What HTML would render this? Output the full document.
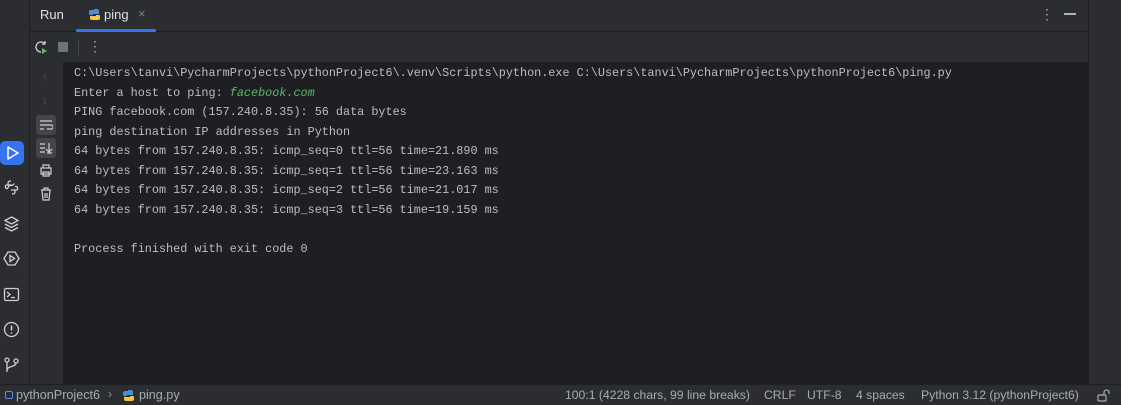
<!DOCTYPE html>
<html><head><style>
*{margin:0;padding:0;box-sizing:border-box}
body{width:1121px;height:405px;background:#2b2d30;position:relative;overflow:hidden;font-family:"Liberation Sans",sans-serif;color:#dfe1e5}
.abs{position:absolute}
.console{left:63px;top:62px;width:1026px;height:322px;background:#1e1f22}
.mono{font-family:"Liberation Mono",monospace;font-size:11.8px;color:#bcbec4;white-space:pre;position:absolute;left:74px}
.status{left:0;top:384px;width:1121px;height:21px;background:#2b2d30;border-top:1px solid #1e1f22;font-size:12.2px;color:#a8abb0}
.status .abs{white-space:pre}
svg{position:absolute}
</style></head><body>
<div class="abs" style="left:29px;top:0;width:1px;height:384px;background:#1e1f22"></div>
<div class="abs" style="left:1088px;top:0;width:1px;height:384px;background:#1e1f22"></div>
<div class="abs" style="left:30px;top:31px;width:1058px;height:1px;background:#1e1f22"></div>
<div class="abs" style="left:40px;top:7px;font-size:13px;color:#dfe1e5">Run</div>
<svg style="left:88px;top:8px" width="13" height="13" viewBox="0 0 13 13"><path d="M6 1h3a2 2 0 0 1 2 2v3H5v1H2a1.5 1.5 0 0 1-1-2V4a2 2 0 0 1 2-2h3z" fill="#4a8fd6"/><path d="M7 12H4a2 2 0 0 1-2-2V8h6V7h3a1.5 1.5 0 0 1 1 2v1a2 2 0 0 1-2 2z" fill="#f2c744"/></svg>
<div class="abs" style="left:104px;top:7px;font-size:13px;color:#dfe1e5">ping</div>
<div class="abs" style="left:138px;top:6px;font-size:13px;color:#7a7e85">×</div>
<div class="abs" style="left:76px;top:29px;width:80px;height:3px;background:#3574f0;border-radius:1px"></div>
<div class="abs" style="left:1040px;top:6px;font-size:14px;color:#a8abb0">⋮</div>
<div class="abs" style="left:1064px;top:13px;width:12px;height:1.5px;background:#b0b3b8"></div>
<svg style="left:34px;top:40px" width="14" height="14" viewBox="0 0 14 14"><path d="M11 4A5 5 0 1 0 7 12" stroke="#ced0d6" stroke-width="1.3" fill="none"/><path d="M11 1v3H8" stroke="#ced0d6" stroke-width="1.3" fill="none"/><path d="M8 8l5 3-5 3z" fill="#5fb865"/></svg>
<div class="abs" style="left:58px;top:42px;width:10px;height:10px;background:#6f737a;border-radius:1px"></div>
<div class="abs" style="left:78px;top:39px;width:1px;height:16px;background:#43454a"></div>
<div class="abs" style="left:88px;top:38px;font-size:14px;color:#a8abb0">⋮</div>
<div class="abs console"></div>
<div class="abs" style="left:42px;top:70px;color:#55585e;font-size:12px">↑</div>
<div class="abs" style="left:42px;top:93px;color:#55585e;font-size:12px">↓</div>
<div class="abs" style="left:36px;top:115px;width:20px;height:20px;background:#43454a;border-radius:3px"></div>
<svg style="left:39px;top:119px" width="14" height="12"><path d="M1 2h12M1 6h11a2 2 0 0 1 0 4H8M1 10h4" stroke="#ced0d6" stroke-width="1.2" fill="none"/></svg>
<div class="abs" style="left:36px;top:138px;width:20px;height:20px;background:#43454a;border-radius:3px"></div>
<svg style="left:39px;top:142px" width="14" height="12"><path d="M1 2h5M1 6h5M1 10h5M10 1v9M7 7l3 3 3-3M8 11h5" stroke="#ced0d6" stroke-width="1.2" fill="none"/></svg>
<svg style="left:39px;top:164px" width="14" height="13"><path d="M4 4V1h6v3M2 4h10v6H2zM4 8h6v4H4z" stroke="#ced0d6" stroke-width="1.2" fill="none"/></svg>
<svg style="left:40px;top:187px" width="12" height="14"><path d="M1 3h10M4 3V1h4v2M2 3l1 10h6l1-10M5 6v5M7 6v5" stroke="#ced0d6" stroke-width="1.2" fill="none"/></svg>
<div class="abs" style="left:0;top:141px;width:24px;height:24px;background:#3574f0;border-radius:5px"></div>
<svg style="left:4px;top:145px" width="16" height="16"><path d="M4 2l10 6-10 6z" stroke="#fff" stroke-width="1.5" fill="none" stroke-linejoin="round"/></svg>
<svg style="left:3px;top:179px" width="17" height="17"><path d="M8 2c-3 0-3 1-3 3v1h4M5 6H3.5C2 6 2 9 3.5 9.5H5M9 15c3 0 3-1 3-3v-1H8M12 11h1.5C15 11 15 8 13.5 7.5H12M5 9.5c0-2 1-3 3-3s3-1 3-2" stroke="#ced0d6" stroke-width="1.3" fill="none"/></svg>
<svg style="left:3px;top:215px" width="17" height="17"><path d="M8.5 2L15 5.5 8.5 9 2 5.5zM2 9l6.5 3.5L15 9M2 12.5L8.5 16 15 12.5" stroke="#ced0d6" stroke-width="1.3" fill="none"/></svg>
<svg style="left:3px;top:250px" width="17" height="17"><path d="M5 2h7l4 6.5-4 6.5H5L1 8.5z" stroke="#ced0d6" stroke-width="1.3" fill="none"/><path d="M7 5.5l4.5 3L7 11.5z" stroke="#ced0d6" stroke-width="1.3" fill="none"/></svg>
<svg style="left:3px;top:286px" width="17" height="17"><rect x="1.5" y="2.5" width="14" height="12" rx="1.5" stroke="#ced0d6" stroke-width="1.3" fill="none"/><path d="M4 6l3 2.5L4 11M8 11.5h4" stroke="#ced0d6" stroke-width="1.3" fill="none"/></svg>
<svg style="left:3px;top:321px" width="17" height="17"><circle cx="8.5" cy="8.5" r="7" stroke="#ced0d6" stroke-width="1.3" fill="none"/><path d="M8.5 4.5v5M8.5 11.5v1.2" stroke="#ced0d6" stroke-width="1.5"/></svg>
<svg style="left:3px;top:356px" width="17" height="17"><circle cx="4" cy="4" r="2" stroke="#ced0d6" stroke-width="1.3" fill="none"/><circle cx="13" cy="5" r="2" stroke="#ced0d6" stroke-width="1.3" fill="none"/><path d="M4 6v10M13 7c0 4-9 3-9 7" stroke="#ced0d6" stroke-width="1.3" fill="none"/></svg>
<div class="mono" style="top:66px">C:\Users\tanvi\PycharmProjects\pythonProject6\.venv\Scripts\python.exe C:\Users\tanvi\PycharmProjects\pythonProject6\ping.py</div>
<div class="mono" style="top:85.5px">Enter a host to ping: <i style="color:#5fb865">facebook.com</i></div>
<div class="mono" style="top:105px">PING facebook.com (157.240.8.35): 56 data bytes</div>
<div class="mono" style="top:124.5px">ping destination IP addresses in Python</div>
<div class="mono" style="top:144px">64 bytes from 157.240.8.35: icmp_seq=0 ttl=56 time=21.890 ms</div>
<div class="mono" style="top:163.5px">64 bytes from 157.240.8.35: icmp_seq=1 ttl=56 time=23.163 ms</div>
<div class="mono" style="top:183px">64 bytes from 157.240.8.35: icmp_seq=2 ttl=56 time=21.017 ms</div>
<div class="mono" style="top:202.5px">64 bytes from 157.240.8.35: icmp_seq=3 ttl=56 time=19.159 ms</div>
<div class="mono" style="top:241.5px">Process finished with exit code 0</div>
<div class="abs status">
<div class="abs" style="left:5px;top:6px;width:8px;height:8px;border:1.3px solid #5b8def;border-radius:2px"></div>
<div class="abs" style="left:16px;top:3px;font-size:12.6px">pythonProject6</div>
<div class="abs" style="left:108px;top:2px;color:#8c8f94">›</div>
<svg style="left:122px;top:4px" width="13" height="13" viewBox="0 0 13 13"><path d="M6 1h3a2 2 0 0 1 2 2v3H5v1H2a1.5 1.5 0 0 1-1-2V4a2 2 0 0 1 2-2h3z" fill="#4a8fd6"/><path d="M7 12H4a2 2 0 0 1-2-2V8h6V7h3a1.5 1.5 0 0 1 1 2v1a2 2 0 0 1-2 2z" fill="#f2c744"/></svg>
<div class="abs" style="left:139px;top:3px;font-size:12.6px">ping.py</div>
<div class="abs" style="left:565px;top:3px">100:1 (4228 chars, 99 line breaks)</div>
<div class="abs" style="left:764px;top:3px">CRLF</div>
<div class="abs" style="left:807px;top:3px">UTF-8</div>
<div class="abs" style="left:856px;top:3px">4 spaces</div>
<div class="abs" style="left:921px;top:3px">Python 3.12 (pythonProject6)</div>
<svg style="left:1097px;top:4px" width="13" height="13"><rect x="1" y="6" width="8" height="6" rx="1" stroke="#a8abb0" stroke-width="1.2" fill="none"/><path d="M7 6V3.5a2.5 2.5 0 0 1 5 0V5" stroke="#a8abb0" stroke-width="1.2" fill="none"/></svg>
</div>
</body></html>
